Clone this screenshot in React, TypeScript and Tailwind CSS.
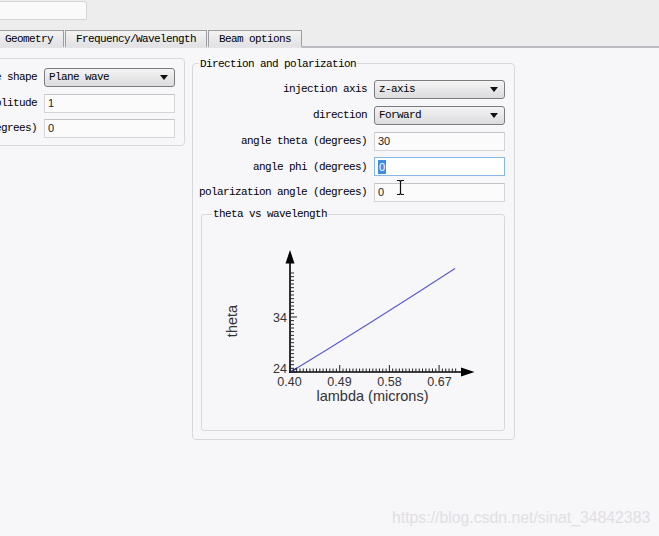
import type { ReactNode } from 'react'

const mono = "font-['Liberation_Mono',monospace] text-[11px] tracking-[-0.6px] text-black"

function Select({ value }: { value: string }) {
  return (
    <div className="h-[19px] w-[131px] shrink-0 flex items-center justify-between rounded-[3px] border border-[#7c7c80] bg-gradient-to-b from-[#f4f4f5] to-[#dcdcde] pl-[4px] pr-[6px]">
      <span className={mono}>{value}</span>
      <svg width="8" height="5" viewBox="0 0 8 5"><path d="M0 0h8L4 5z" fill="#111" /></svg>
    </div>
  )
}

function Field({ value, focused }: { value: string; focused?: boolean }) {
  return (
    <div
      className={
        'h-[19px] w-[131px] shrink-0 flex items-center px-[3px] border font-[\'Liberation_Sans\',sans-serif] text-[11px] text-[#222] ' +
        (focused ? 'border-[#86b8e8] bg-white' : 'border-[#d4d4d8] border-t-[#c4c4c8] bg-[#fbfbfc]')
      }
    >
      {focused ? <span className="bg-[#3d8ee0] text-white px-[1px] leading-[14px]">{value}</span> : value}
    </div>
  )
}

function Row({ label, children }: { label: string; children: ReactNode }) {
  return (
    <div className="flex items-center gap-[7px] h-[19px]">
      <div className="flex-1 min-w-0 flex justify-end">
        <span className={mono + ' whitespace-nowrap'}>{label}</span>
      </div>
      {children}
    </div>
  )
}

function Chart() {
  const yTicks = Array.from({ length: 28 }, (_, i) => 372 - i * (55 / 15))
  const xTicks = Array.from({ length: 51 }, (_, i) => 290 + i * (49.7 / 15)).filter(x => x < 457)
  return (
    <svg width="301" height="215" className="block">
      <g transform="translate(-202 -215)" fontFamily="'Liberation Sans', Arial, sans-serif" fill="#333">
        <line x1="290" y1="373" x2="290" y2="262" stroke="#000" strokeWidth="1.6" />
        <path d="M290 250 L294.5 263.5 L285.5 263.5 Z" fill="#000" />
        <line x1="289" y1="372" x2="462" y2="372" stroke="#000" strokeWidth="1.6" />
        <path d="M474.5 372 L461 367.5 L461 376.5 Z" fill="#000" />
        {yTicks.map((y, i) => (
          <line key={'y' + i} x1="290" y1={y} x2={i % 15 === 0 ? 297 : 294} y2={y} stroke="#222" strokeWidth="1" />
        ))}
        {xTicks.map((x, i) => (
          <line key={'x' + i} x1={x} y1="372" x2={x} y2={i % 15 === 0 ? 365 : 368.5} stroke="#222" strokeWidth="1" />
        ))}
        <text x="287" y="322" fontSize="12.5" textAnchor="end">34</text>
        <text x="287" y="373" fontSize="12.5" textAnchor="end">24</text>
        <text x="289.5" y="386" fontSize="12.5" textAnchor="middle">0.40</text>
        <text x="339.5" y="386" fontSize="12.5" textAnchor="middle">0.49</text>
        <text x="389.5" y="386" fontSize="12.5" textAnchor="middle">0.58</text>
        <text x="439.5" y="386" fontSize="12.5" textAnchor="middle">0.67</text>
        <text x="372.5" y="400.5" fontSize="14.5" textAnchor="middle">lambda (microns)</text>
        <text transform="translate(236.5 321) rotate(-90)" fontSize="14.5" textAnchor="middle">theta</text>
        <path d="M290.5 372 Q368 325 455 268.5" fill="none" stroke="#5a5ad2" strokeWidth="1.1" />
        <path d="M290.5 372 L297 368" stroke="#1c1c6a" strokeWidth="1.3" />
      </g>
    </svg>
  )
}

export default function App() {
  return (
    <div className="relative w-[659px] h-[536px] overflow-hidden bg-[#f7f6f8]">
      {/* top strip */}
      <div className="h-[30px] bg-[#ededee] pt-[1px]">
        <div className="h-[19px] w-[89px] -ml-[2px] rounded-[2px] border border-[#d6d6d8] bg-[#fafafa]" />
      </div>

      {/* tabs */}
      <div className="flex h-[18px] bg-[#ededee] -ml-[6px]">
        {['Geometry', 'Frequency/Wavelength', 'Beam options'].map((t, i) => (
          <div
            key={t}
            className={
              mono +
              ' h-full flex items-center px-[10px] border border-[#9e9ea2] border-b-2 border-b-[#e4e4e6] bg-gradient-to-b from-[#f3f3f4] to-[#e2e2e4] pt-[2px]' +
              (i > 0 ? ' ml-px' : '')
            }
          >
            {t}
          </div>
        ))}
        <div className="flex-1 border-b-2 border-[#bcbbbf]" />
      </div>

      {/* content */}
      <div className="flex items-start gap-[7px] -ml-[70px]">
        <div className="w-[255px] mt-[10px] rounded-[4px] border border-[#d8d8dc] pl-[8px] pr-[9px] pt-[9px] pb-[7px] flex flex-col gap-[6.5px]">
          <Row label="source shape"><Select value="Plane wave" /></Row>
          <Row label="amplitude"><Field value="1" /></Row>
          <Row label="phase (degrees)"><Field value="0" /></Row>
        </div>

        <div className="relative w-[323px] mt-[15px] rounded-[4px] border border-[#d8d8dc] pl-[8px] pr-[9px] pt-[16px] pb-[8px]">
          <span className={mono + ' absolute left-[6px] -top-[6px] px-[1px] bg-[#f7f6f8] leading-[12px]'}>Direction and polarization</span>
          <div className="flex flex-col gap-[6.75px]">
            <Row label="injection axis"><Select value="z-axis" /></Row>
            <Row label="direction"><Select value="Forward" /></Row>
            <Row label="angle theta (degrees)"><Field value="30" /></Row>
            <Row label="angle phi (degrees)"><Field value="0" focused /></Row>
            <Row label="polarization angle (degrees)"><Field value="0" /></Row>
          </div>
          <div className="relative mt-[12px] rounded-[3px] border border-[#d8d8dc]">
            <span className={mono + ' absolute left-[10px] -top-[6px] px-[1px] bg-[#f7f6f8] leading-[11px]'}>theta vs wavelength</span>
            <Chart />
          </div>
        </div>
      </div>

      {/* text cursor */}
      <svg className="absolute left-[396px] top-[180px]" width="9" height="15" viewBox="0 0 9 15">
        <path d="M1 0.5h2.5L4.5 1.5 5.5 0.5H8M4.5 1.5v12M1 14.5h2.5l1-1 1 1H8" fill="none" stroke="#111" strokeWidth="1.2" />
      </svg>

      {/* watermark */}
      <span className="absolute left-[392px] top-[506px] font-['Liberation_Sans',sans-serif] text-[15.8px] text-[#e0dfe4] whitespace-nowrap">
        https://blog.csdn.net/sinat_34842383
      </span>
    </div>
  )
}
